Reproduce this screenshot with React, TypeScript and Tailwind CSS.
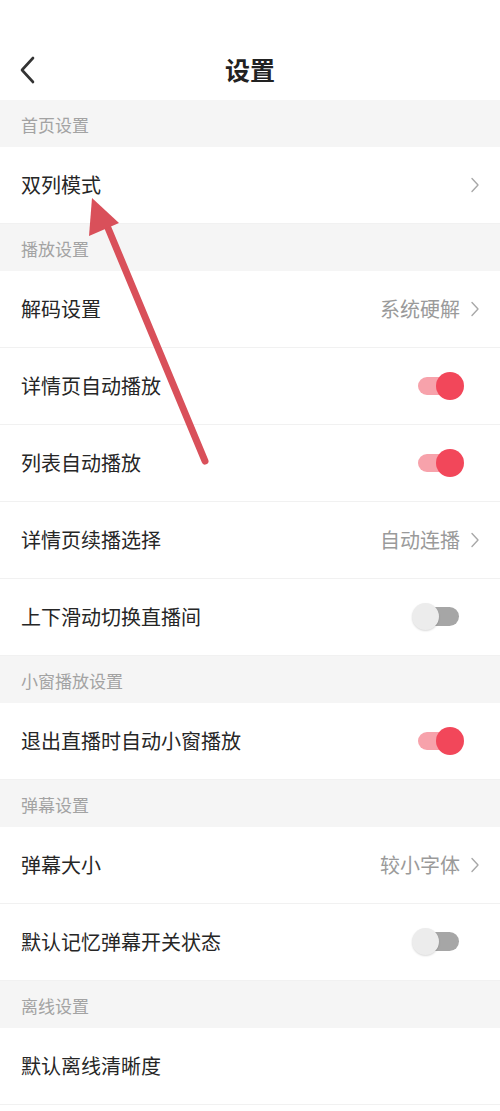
import React from 'react';

type Row =
  | { kind: 'link'; label: string; value?: string; hideArrow?: boolean }
  | { kind: 'toggle'; label: string; on: boolean };

interface Section {
  title: string;
  rows: Row[];
}

const sections: Section[] = [
  { title: '首页设置', rows: [{ kind: 'link', label: '双列模式' }] },
  {
    title: '播放设置',
    rows: [
      { kind: 'link', label: '解码设置', value: '系统硬解' },
      { kind: 'toggle', label: '详情页自动播放', on: true },
      { kind: 'toggle', label: '列表自动播放', on: true },
      { kind: 'link', label: '详情页续播选择', value: '自动连播' },
      { kind: 'toggle', label: '上下滑动切换直播间', on: false },
    ],
  },
  {
    title: '小窗播放设置',
    rows: [{ kind: 'toggle', label: '退出直播时自动小窗播放', on: true }],
  },
  {
    title: '弹幕设置',
    rows: [
      { kind: 'link', label: '弹幕大小', value: '较小字体' },
      { kind: 'toggle', label: '默认记忆弹幕开关状态', on: false },
    ],
  },
  { title: '离线设置', rows: [{ kind: 'link', label: '默认离线清晰度', hideArrow: true }] },
];

const Chevron = () => (
  <svg width="10" height="16" viewBox="0 0 10 16" fill="none">
    <path d="M2 1.5 L8 8 L2 14.5" stroke="#a8a8a8" strokeWidth="1.4" strokeLinecap="round" strokeLinejoin="round" />
  </svg>
);

const Toggle = ({ on }: { on: boolean }) => (
  <div className="relative w-[52px] h-[30px]">
    <div
      className={
        on
          ? 'absolute left-[6px] right-[6px] top-[6px] h-[18px] rounded-full bg-[#f7a2ab]'
          : 'absolute left-[4px] right-[5px] top-[5px] h-[19px] rounded-full bg-[#a6a6a6]'
      }
    />
    <div
      className={
        on
          ? 'absolute right-0 top-[1px] w-[28px] h-[28px] rounded-full bg-[#f2475a]'
          : 'absolute left-0 top-[1px] w-[27px] h-[27px] rounded-full bg-[#ececec] shadow-[0_1px_2px_rgba(0,0,0,0.15)]'
      }
    />
  </div>
);

const SettingRow = ({ row }: { row: Row }) => (
  <div
    className={
      row.kind === 'toggle'
        ? 'h-[77px] bg-white border-b border-[#f1f1f1] flex items-center justify-between pl-[21px] pr-[36px]'
        : 'h-[77px] bg-white border-b border-[#f1f1f1] flex items-center justify-between pl-[21px] pr-[20px]'
    }
  >
    <span className="text-[20px] text-[#262626]">{row.label}</span>
    {row.kind === 'link' ? (
      <div className="flex items-center gap-[10px]">
        {row.value && <span className="text-[20px] text-[#9a9a9a]">{row.value}</span>}
        {!row.hideArrow && <Chevron />}
      </div>
    ) : (
      <Toggle on={row.on} />
    )}
  </div>
);

export default function App() {
  return (
    <div
      className="relative w-[500px] h-[1111px] overflow-hidden bg-white"
      style={{ fontFamily: '"Noto Sans CJK SC", "Noto Sans", sans-serif' }}
    >
      {/* header */}
      <div className="h-[100px] pt-[40px] bg-white">
        <div className="relative h-[60px] flex items-center justify-center">
          <svg className="absolute left-[18px] top-[16px]" width="20" height="28" viewBox="0 0 20 28" fill="none">
            <path d="M15 2 L4 14 L15 26" stroke="#333" strokeWidth="2.6" strokeLinecap="round" strokeLinejoin="round" />
          </svg>
          <span className="text-[25px] font-bold text-[#222]">设置</span>
        </div>
      </div>

      {sections.map((s) => (
        <div key={s.title}>
          <div className="h-[47px] bg-[#f5f5f5] flex items-center pl-[21px] pt-[2px]">
            <span className="text-[17px] text-[#a3a3a3]">{s.title}</span>
          </div>
          {s.rows.map((r) => (
            <SettingRow key={r.label} row={r} />
          ))}
        </div>
      ))}

      {/* annotation arrow */}
      <svg className="absolute inset-0 pointer-events-none" width="500" height="1111" viewBox="0 0 500 1111">
        <line x1="205" y1="461" x2="108" y2="228" stroke="#d9505a" strokeWidth="7" strokeLinecap="round" />
        <polygon points="92,198 89,236 119,223" fill="#d9505a" />
      </svg>
    </div>
  );
}
